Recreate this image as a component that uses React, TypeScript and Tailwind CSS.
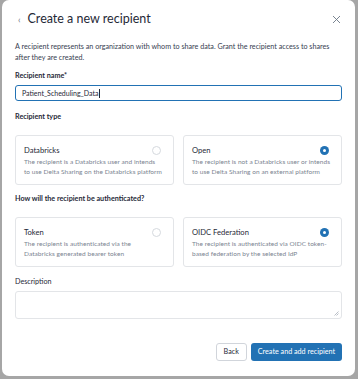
import React from 'react';

const font = { fontFamily: 'Lato, "Open Sans", sans-serif' };

const Radio = ({ checked }: { checked: boolean }) =>
  checked ? (
    <span className="flex h-[9px] w-[9px] items-center justify-center rounded-full bg-[#2272b4]">
      <span className="h-[3px] w-[3px] rounded-full bg-white" />
    </span>
  ) : (
    <span className="h-[9px] w-[9px] rounded-full border border-[#d5d9de] bg-white" />
  );

const Option = ({ title, text, checked }: { title: string; text: string; checked: boolean }) => (
  <div className="h-[50px] flex-1 rounded-[3px] border border-[#e3e5e8] bg-white px-[8px] pt-[9px]">
    <div className="flex h-[11px] items-center justify-between pr-[4px]">
      <span className="text-[7.6px] leading-[11px] text-[#1f2937]">{title}</span>
      <Radio checked={checked} />
    </div>
    <p className="mt-[1px] pr-[2px] text-[6.5px] leading-[10px] tracking-[0.05px] text-[#7b8491]">{text}</p>
  </div>
);

export default function App() {
  return (
    <div className="h-[379px] w-[358px] bg-[#a6a6a6] pl-[2px] pr-[3px] pb-[3px]" style={font}>
      <div className="flex h-full flex-col rounded-[7px] bg-white px-[13px] pt-[9px] pb-[15px]">
        <div className="flex h-[20px] items-center justify-between">
          <div className="flex items-center gap-[7px] pl-[3px]">
            <span className="text-[9px] leading-none text-[#6b7280]">‹</span>
            <h1 className="text-[12.5px] font-normal leading-[20px] text-[#1f2937]">Create a new recipient</h1>
          </div>
          <svg className="mr-[1px]" width="9" height="9" viewBox="0 0 9 9">
            <path d="M1 1L8 8M8 1L1 8" stroke="#6b7785" strokeWidth="0.9" />
          </svg>
        </div>

        <p className="mt-[12px] text-[7.2px] leading-[11px] text-[#374151]">
          A recipient represents an organization with whom to share data. Grant the recipient access to shares after they are created.
        </p>

        <label className="mt-[7px] text-[7.2px] font-bold leading-[11px] text-[#1f2937]">Recipient name*</label>
        <div className="mt-[4px] flex h-[16px] items-center rounded-[3px] border border-[#2272b4] px-[6px] text-[7px] text-[#1f2937]">
          Patient_Scheduling_Data<span className="ml-[1px] h-[9px] w-px bg-[#1f2937]" />
        </div>

        <label className="mt-[10px] text-[7.2px] font-bold leading-[11px] text-[#1f2937]">Recipient type</label>
        <div className="mt-[13px] flex gap-[9px]">
          <Option
            title="Databricks"
            text="The recipient is a Databricks user and intends to use Delta Sharing on the Databricks platform"
            checked={false}
          />
          <Option
            title="Open"
            text="The recipient is not a Databricks user or intends to use Delta Sharing on an external platform"
            checked
          />
        </div>

        <label className="mt-[8px] text-[7.2px] font-bold leading-[11px] text-[#1f2937]">How will the recipient be authenticated?</label>
        <div className="mt-[13px] flex gap-[9px]">
          <Option
            title="Token"
            text="The recipient is authenticated via the Databricks generated bearer token"
            checked={false}
          />
          <Option
            title="OIDC Federation"
            text="The recipient is authenticated via OIDC token-based federation by the selected IdP"
            checked
          />
        </div>

        <label className="mt-[9px] text-[7.2px] leading-[11px] text-[#1f2937]">Description</label>
        <div className="relative mt-[4px] h-[28px] rounded-[3px] border border-[#e3e5e8]">
          <svg className="absolute bottom-[2px] right-[2px]" width="5" height="5" viewBox="0 0 5 5">
            <path d="M4.5 0.5L0.5 4.5M4.5 2.5L2.5 4.5" stroke="#9ca3af" strokeWidth="0.7" />
          </svg>
        </div>

        <div className="mt-auto flex justify-end gap-[4px]">
          <button className="h-[18px] rounded-[3px] border border-[#d1d5db] bg-white px-[7px] text-[7.2px] text-[#1f2937]">Back</button>
          <button className="h-[18px] rounded-[3px] bg-[#2272b4] px-[7px] text-[7.2px] text-white">Create and add recipient</button>
        </div>
      </div>
    </div>
  );
}
